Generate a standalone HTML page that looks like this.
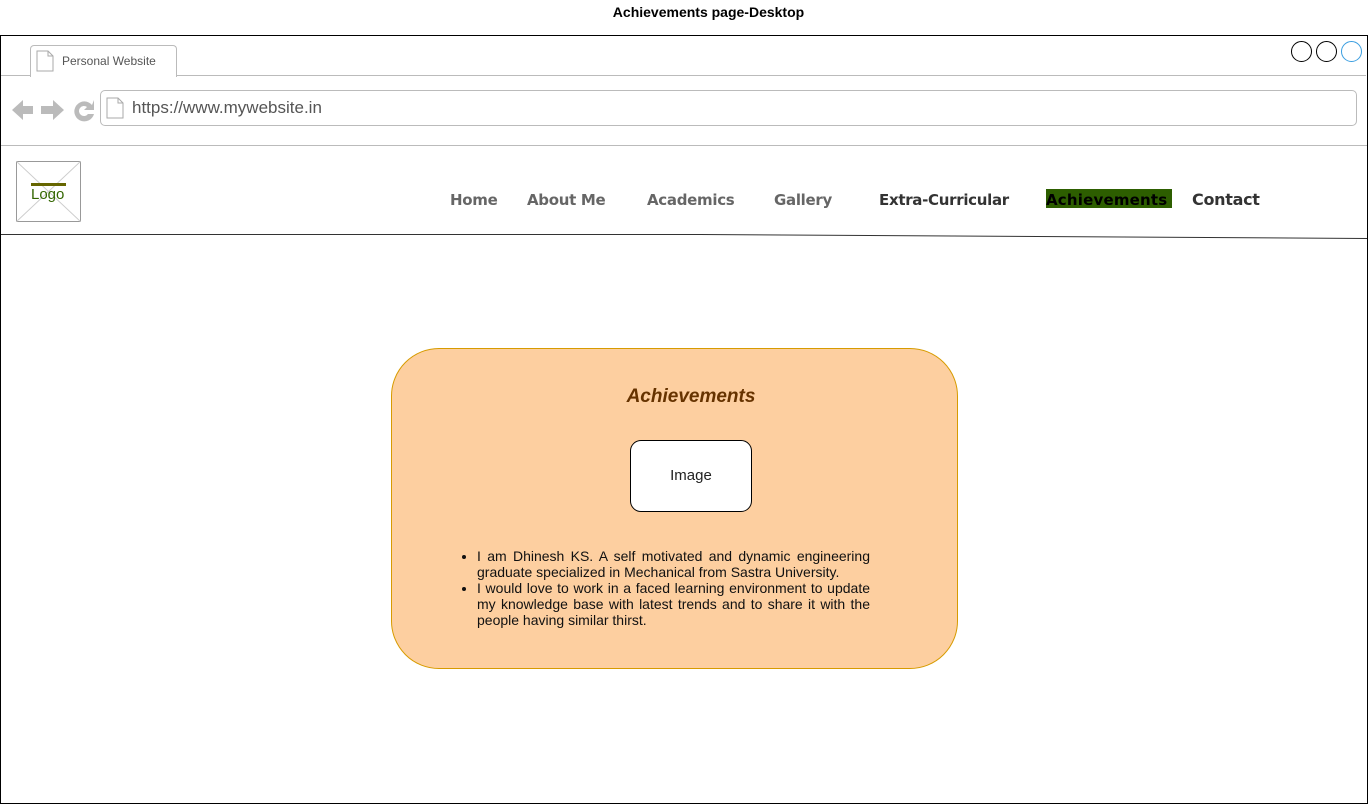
<!DOCTYPE html>
<html><head><meta charset="utf-8"><style>
body{margin:0;width:1369px;height:805px;background:#fff;position:relative;overflow:hidden;font-family:"Liberation Sans",sans-serif}
.a{position:absolute}
.nav{position:absolute;top:191px;font-family:"DejaVu Sans",sans-serif;font-weight:bold;font-size:15px;color:#666;white-space:nowrap;letter-spacing:-0.3px}
</style></head><body>
<div class="a" style="left:0;top:4px;width:1417px;text-align:center;font-weight:bold;font-size:14px;color:#000">Achievements page-Desktop</div>
<div class="a" style="left:0;top:35px;width:1366px;height:767px;border:1px solid #000"></div>
<div class="a" style="left:30px;top:45px;width:145px;height:31px;border:1px solid #bbb;border-bottom:none;border-radius:4px 4px 0 0;background:#fff"></div>
<div class="a" style="left:1px;top:75px;width:29px;border-top:1px solid #bbb"></div>
<div class="a" style="left:176px;top:75px;width:1190px;border-top:1px solid #bbb"></div>
<svg class="a" style="left:36px;top:50px" width="18" height="22"><path d="M1 1h11l5 5v15H1z M12 1v5h5" fill="#fff" stroke="#aaa"/></svg>
<div class="a" style="left:62px;top:54px;font-size:12px;color:#555">Personal Website</div>
<div class="a" style="left:1291px;top:41px;width:19px;height:19px;border:1px solid #000;border-radius:50%"></div>
<div class="a" style="left:1316px;top:41px;width:19px;height:19px;border:1px solid #000;border-radius:50%"></div>
<div class="a" style="left:1341px;top:41px;width:19px;height:19px;border:1px solid #3a9ee0;border-radius:50%"></div>
<svg class="a" style="left:10px;top:96px" width="90" height="28">
<path d="M2 14L13 4v6h10v8H13v6z" fill="#bbb"/>
<path d="M54 14L43 4v6H31v8h12v6z" fill="#bbb"/>
<path d="M82 9a10 10 0 1 0 2 9h-6a5 5 0 1 1-1-7l-3 3h10V4z" fill="#bbb"/>
</svg>
<div class="a" style="left:100px;top:90px;width:1255px;height:34px;border:1px solid #bbb;border-radius:5px"></div>
<svg class="a" style="left:106px;top:97px" width="18" height="22"><path d="M1 1h11l5 5v15H1z M12 1v5h5" fill="#fff" stroke="#aaa"/></svg>
<div class="a" style="left:132px;top:98px;font-size:17px;color:#555">https://www.mywebsite.in</div>
<div class="a" style="left:1px;top:145px;width:1366px;border-top:1px solid #bbb"></div>
<svg class="a" style="left:16px;top:161px" width="65" height="61"><rect x="0.5" y="0.5" width="64" height="60" fill="#fff" stroke="#999"/><path d="M0 0L65 61M65 0L0 61" stroke="#ccc"/><rect x="15" y="22" width="35" height="3" fill="#666600"/></svg>
<div class="a" style="left:31px;top:186px;font-size:15px;color:#336600">Logo</div>
<div class="nav" style="left:450px">Home</div>
<div class="nav" style="left:527px">About Me</div>
<div class="nav" style="left:647px">Academics</div>
<div class="nav" style="left:774px">Gallery</div>
<div class="nav" style="left:879px;color:#333">Extra-Curricular</div>
<div class="a" style="left:1046px;top:189px;width:126px;height:19px;background:#2d5e00"></div>
<div class="nav" style="left:1046px;color:#000;letter-spacing:0.2px">Achievements</div>
<div class="nav" style="left:1192px;color:#333;font-size:16px;top:190px">Contact</div>
<svg class="a" style="left:0;top:230px" width="1369" height="12"><path d="M1 4.5H700L1367 8.5" stroke="#333" fill="none"/></svg>
<div class="a" style="left:391px;top:348px;width:565px;height:319px;background:#fdcfa0;border:1px solid #d79b00;border-radius:48px"></div>
<div class="a" style="left:391px;top:386px;width:600px;text-align:center;font-size:19px;font-weight:bold;font-style:italic;color:#663300">Achievements</div>
<div class="a" style="left:630px;top:440px;width:120px;height:70px;background:#fff;border:1px solid #000;border-radius:11px;text-align:center;line-height:70px;font-size:15px;color:#222">Image</div>
<ul class="a" style="left:459px;top:548px;width:393px;margin:0;padding-left:18px;font-size:14px;line-height:16px;color:#111;text-align:justify">
<li>I am Dhinesh KS. A self motivated and dynamic engineering graduate specialized in Mechanical from Sastra University.</li>
<li>I would love to work in a faced learning environment to update my knowledge base with latest trends and to share it with the people having similar thirst.</li>
</ul>
</body></html>
